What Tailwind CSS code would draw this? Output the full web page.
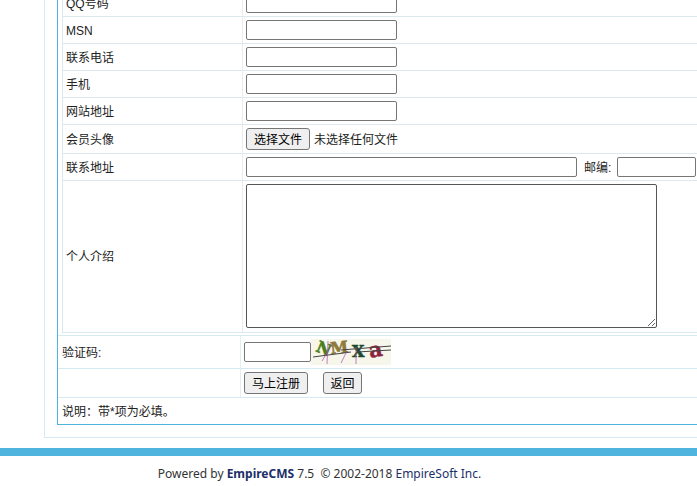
<!DOCTYPE html>
<html lang="zh-CN">
  <head>
    <meta charset="UTF-8" />
    <title>会员注册</title>
    <script src="https://cdn.jsdelivr.net/npm/@tailwindcss/browser@4"></script>
  </head>
  <body class="bg-white text-[#222] text-[12px] overflow-hidden h-[486px] font-['Liberation_Sans','Noto_Sans_CJK_SC',sans-serif]">
    <!-- outer column -->
    <div class="ml-[44px] h-[438px] border-l border-b border-[#d6eaf3] pl-[12px] w-[653px] overflow-hidden">
      <div class="h-[425px] border-l border-b border-[#4fb4de] w-[700px] overflow-hidden">
        <!-- inner table, first row runs off the top -->
        <div class="ml-[4px] -mt-[10px] h-[343px] border-l border-b border-[#dbe8ef]">
          <div class="flex h-[27px] border-b border-[#dbe8ef]">
            <div class="w-[180px] pl-[3px] pt-[1px] flex items-center border-r border-[#e4eef3]">QQ号码</div>
            <div class="pl-[3px] pt-[3px]"><input type="text" class="block w-[151px] h-[20px] border border-[#767676] rounded-[2px]" /></div>
          </div>
          <div class="flex h-[27px] border-b border-[#dbe8ef]">
            <div class="w-[180px] pl-[3px] pt-[1px] flex items-center border-r border-[#e4eef3]">MSN</div>
            <div class="pl-[3px] pt-[3px]"><input type="text" class="block w-[151px] h-[20px] border border-[#767676] rounded-[2px]" /></div>
          </div>
          <div class="flex h-[27px] border-b border-[#dbe8ef]">
            <div class="w-[180px] pl-[3px] pt-[1px] flex items-center border-r border-[#e4eef3]">联系电话</div>
            <div class="pl-[3px] pt-[3px]"><input type="text" class="block w-[151px] h-[20px] border border-[#767676] rounded-[2px]" /></div>
          </div>
          <div class="flex h-[27px] border-b border-[#dbe8ef]">
            <div class="w-[180px] pl-[3px] pt-[1px] flex items-center border-r border-[#e4eef3]">手机</div>
            <div class="pl-[3px] pt-[3px]"><input type="text" class="block w-[151px] h-[20px] border border-[#767676] rounded-[2px]" /></div>
          </div>
          <div class="flex h-[27px] border-b border-[#dbe8ef]">
            <div class="w-[180px] pl-[3px] pt-[1px] flex items-center border-r border-[#e4eef3]">网站地址</div>
            <div class="pl-[3px] pt-[3px]"><input type="text" class="block w-[151px] h-[20px] border border-[#767676] rounded-[2px]" /></div>
          </div>
          <div class="flex h-[29px] border-b border-[#dbe8ef]">
            <div class="w-[180px] pl-[3px] pt-[1px] flex items-center border-r border-[#e4eef3]">会员头像</div>
            <div class="pl-[3px] pt-[3px] flex items-start">
              <button type="button" class="w-[64px] h-[22px] pt-[1px] bg-[#efefef] border border-[#767676] rounded-[3px] text-[12px] text-black">选择文件</button>
              <span class="ml-[4px] pt-[1px] leading-[22px]">未选择任何文件</span>
            </div>
          </div>
          <div class="flex h-[27px] border-b border-[#dbe8ef]">
            <div class="w-[180px] pl-[3px] pt-[1px] flex items-center border-r border-[#e4eef3]">联系地址</div>
            <div class="pl-[3px] pt-[3px] flex items-start">
              <input type="text" class="block w-[331px] h-[20px] border border-[#767676] rounded-[2px]" />
              <span class="ml-[7px] pt-[1px] leading-[20px] w-[33px]">邮编:</span>
              <input type="text" class="block w-[79px] h-[20px] border border-[#767676] rounded-[2px]" />
            </div>
          </div>
          <div class="flex h-[151px]">
            <div class="w-[180px] pl-[3px] pt-[1px] flex items-center border-r border-[#e4eef3]">个人介绍</div>
            <div class="pl-[3px] pt-[3px]"><textarea class="block w-[411px] h-[144px] border border-[#555] rounded-[2px]"></textarea></div>
          </div>
        </div>
        <!-- captcha and buttons -->
        <div class="mt-[2px] flex h-[34px] border-t border-b border-[#d6eaf3]">
          <div class="w-[183px] pl-[4px] pt-[1px] flex items-center border-r border-[#e4eef3]">验证码:</div>
          <div class="pl-[3px] flex items-start">
            <input type="text" class="block mt-[6px] w-[67px] h-[20px] border border-[#767676] rounded-[2px]" />
            <svg class="block mt-[3px]" width="80" height="26" viewBox="0 0 80 26">
              <rect width="80" height="26" fill="#f6f6ea" />
              <text transform="translate(4 12) rotate(22)" font-family="DejaVu Serif" font-weight="700" font-size="16" stroke="#4a7f18" stroke-width="0.6" fill="#4a7f18">N</text>
              <text transform="translate(20 15) rotate(-6)" font-family="DejaVu Serif" font-weight="700" font-size="16" stroke="#8f7a38" stroke-width="0.6" fill="#8f7a38">M</text>
              <text transform="translate(41 18)" font-family="DejaVu Serif" font-weight="700" font-size="16" stroke="#1d4a2c" stroke-width="0.6" fill="#1d4a2c">X</text>
              <text transform="translate(59 19) rotate(-10)" font-family="DejaVu Serif" font-weight="700" font-size="21" stroke="#8c2340" stroke-width="0.4" fill="#8c2340">a</text>
              <path d="M2 18 L40 13 M30 11 L80 7 M46 13 L80 11" stroke="#444" stroke-width="1" fill="none" />
              <path d="M17 2 L16 25 M22 4 L11 22 M36 12 L30 24 M45 8 L45 25" stroke="#a64db0" stroke-width="0.7" fill="none" />
            </svg>
          </div>
        </div>
        <div class="flex h-[29px] border-b border-[#d6eaf3]">
          <div class="w-[183px] border-r border-[#e4eef3]"></div>
          <div class="pl-[3px] pt-[3px] flex items-start gap-[15px]">
            <button type="button" class="w-[64px] h-[22px] pt-[1px] bg-[#efefef] border border-[#767676] rounded-[3px] text-[12px] text-black">马上注册</button>
            <button type="button" class="w-[39px] h-[22px] pt-[1px] bg-[#efefef] border border-[#767676] rounded-[3px] text-[12px] text-black">返回</button>
          </div>
        </div>
        <div class="pl-[4px] pt-[1px] leading-[26px]">说明&#xFF1A;带*项为必填。</div>
      </div>
    </div>
    <!-- footer -->
    <div class="mt-[10px] h-[8px] bg-[#4fb4de]"></div>
    <p class="mt-[10px] w-[639px] text-center leading-[16px] text-[#333] font-['Noto_Sans',sans-serif]">Powered by <b class="text-[#1c2f6b]">EmpireCMS</b> 7.5&nbsp; © 2002-2018 <span class="text-[#1c2f6b]">EmpireSoft Inc.</span></p>
  </body>
</html>
